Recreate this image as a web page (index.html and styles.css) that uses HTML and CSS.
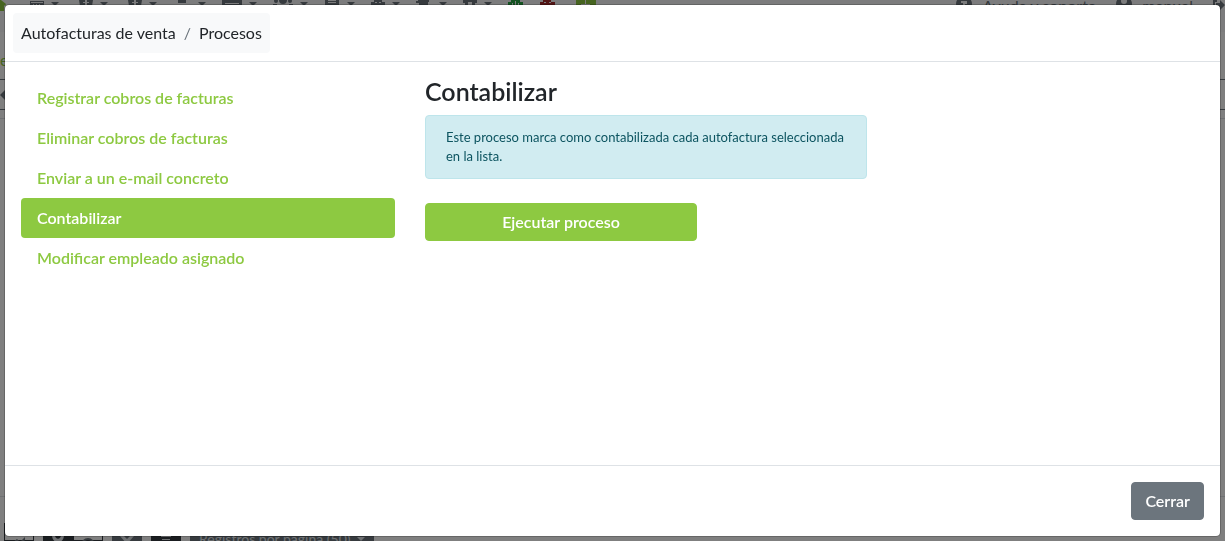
FILE: index.html
```html
<!DOCTYPE html>
<html lang="es">

<head>
  <meta charset="UTF-8">
  <meta name="viewport" content="width=device-width, initial-scale=1.0">

  <title>Autofacturas de venta</title>
  <link rel="stylesheet" href="styles.css">
</head>

<body>
  <!-- List page behind the dialog -->
  <div class="page" aria-hidden="true">
    <header class="toolbar">
      <svg class="home" viewBox="0 0 6 12"><path d="M0 0h1l5 4-1 2-1-1v6H0z"/></svg>
      <div class="menus">
        <span class="menu"><svg class="w18" viewBox="0 0 18 12"><path d="M4 1h14v11H4z"/><path class="cut" d="M5 2h12v1H5zM7 4h1v1H7zM10 4h1v1h-1zM13 4h1v1h-1z"/></svg><i class="caret"></i></span>
        <span class="menu"><svg class="w18" viewBox="0 0 18 12"><path d="M4 0h14l-2 12H6z"/><path class="cut" d="M10 0h2v2h2v1h-2v2h-2V3H8V2h2z"/></svg><i class="caret"></i></span>
        <span class="menu"><svg class="w18" viewBox="0 0 18 12"><path d="M4 0h14l-2 12H6z"/><path class="cut" d="M10 0h2v2h2v1h-2v2h-2V3H8V2h2z"/></svg><i class="caret"></i></span>
        <span class="menu"><svg class="w18" viewBox="0 0 18 12"><path d="M5 0h8v3H5zM0 6h18v6H0z"/></svg><i class="caret"></i></span>
        <span class="menu"><svg class="w20" viewBox="0 0 20 12"><path d="M0 0h20v12H0z"/><path class="cut" d="M3 3h14v1H3z"/></svg><i class="caret"></i></span>
        <span class="menu"><svg class="w20" viewBox="0 0 20 12"><circle cx="3" cy="1" r="2"/><circle cx="10" cy="0" r="4"/><circle cx="17" cy="1" r="2"/><path d="M0 4h4v3H0zM16 4h4v3h-4zM5 6h10v6H5z"/></svg><i class="caret"></i></span>
        <span class="menu"><svg class="w16" viewBox="0 0 16 12"><path d="M1 0h14v12H1z"/><path class="cut" d="M4 0h8v1H4zM4 2h8v1H4z"/></svg><i class="caret"></i></span>
        <span class="menu"><svg class="w14" viewBox="0 0 14 12"><path d="M3 0h8v2h3v10H0V2h3z"/><path class="cut" d="M4 2h2v1H4zM8 2h2v1H8z"/></svg><i class="caret"></i></span>
        <span class="menu"><svg class="w16" viewBox="0 0 16 12"><path d="M2 0h11v2h-1v10H3V3H0V1h2z"/></svg><i class="caret"></i></span>
        <span class="menu"><svg class="w14" viewBox="0 0 14 12"><path d="M0 0h14v3h-2v9H2V3H0z"/><path class="cut" d="M5 2h4v3H5z"/></svg><i class="caret"></i></span>
        <svg class="w16 basket" viewBox="0 0 16 12"><path d="M3 0h9v2h3v3h-1v7H2V5H0V2h3z"/><path class="cut" d="M4 3h1v3H4zM7 1h1v5H7zM10 3h1v3h-1z"/></svg>
        <svg class="w16 robot" viewBox="0 0 16 12"><path d="M3 0h8v2h4v10H0V2h3z"/><path class="cut" d="M4 2h2v1H4zM9 2h2v1H9z"/></svg>
        <svg class="w20 add" viewBox="0 0 20 12"><path d="M0 0h20v12H0z"/><path class="cut" d="M9 0h1v4h4v1h-4v5H9V5H5V4h4z"/></svg>
      </div>
      <div class="session">
        <svg class="w16" viewBox="0 0 16 12"><circle cx="8" cy="4" r="8"/><path class="cut" d="M5 1h6v3H9v2H7V3H5z"/></svg>
        <span class="session-text">Ayuda y soporte</span>
        <svg class="w16" viewBox="0 0 16 12"><circle cx="8" cy="4" r="8"/><circle class="cut" cx="8" cy="1" r="3"/></svg>
        <span class="session-text">manual</span>
        <svg class="w12" viewBox="0 0 12 12"><path d="M0 0h4v2H2v10H0zM3 3h4V0l5 5-5 5V7H3z"/></svg>
      </div>
    </header>
    <div class="title">e</div>
    <div class="filters"><i class="arrow"></i></div>
    <div class="rows"></div>
    <div class="actions">
      <span class="action outline"><svg class="w18" viewBox="0 0 18 12"><path d="M3 6l4-3 3 3 5-5v3l-5 5-3-3-4 3z"/></svg></span>
      <div class="action-group">
        <span class="action dark"><svg class="w18" viewBox="0 0 18 12"><path d="M3 0h3c0 5 6 5 6 0h3c0 4-2 6-4 7v5H7V7C5 6 3 4 3 0z"/></svg></span>
        <span class="action outline"><svg class="w18" viewBox="0 0 18 12"><path d="M2 9a7 7 0 0 1 14 0h-2a5 5 0 0 0-10 0zM8 5h2v4H8z"/></svg></span>
      </div>
      <span class="action"><svg class="w18" viewBox="0 0 18 12"><path d="M2 1h4l3 3 3-3h4l-7 8z"/></svg></span>
      <span class="action dark"><svg class="w18" viewBox="0 0 18 12"><path d="M4 1h10v1H4zM5 4h8v1H5z"/></svg></span>
      <span class="page-size">Registros por página (50) <i class="caret"></i></span>
    </div>
  </div>

  <div class="backdrop">
    <div class="modal" role="dialog" aria-modal="true" aria-label="Procesos">
      <div class="modal-header">
        <ol class="breadcrumb">
          <li>Autofacturas de venta</li>
          <li>Procesos</li>
        </ol>
      </div>

      <div class="modal-body">
        <nav class="processes">
          <a class="process" href="#registrar">Registrar cobros de facturas</a>
          <a class="process" href="#eliminar">Eliminar cobros de facturas</a>
          <a class="process" href="#enviar">Enviar a un e-mail concreto</a>
          <a class="process active" href="#contabilizar">Contabilizar</a>
          <a class="process" href="#modificar">Modificar empleado asignado</a>
        </nav>

        <section class="detail" id="contabilizar">
          <h3>Contabilizar</h3>
          <div class="alert">Este proceso marca como contabilizada cada autofactura seleccionada en la lista.</div>
          <button type="button" class="btn btn-run">Ejecutar proceso</button>
        </section>
      </div>

      <div class="modal-footer">
        <button type="button" class="btn btn-close">Cerrar</button>
      </div>
    </div>
  </div>
</body>
</html>
```

FILE: styles.css
```css
* {
  box-sizing: border-box;
}

body {
  margin: 0;
  height: 100vh;
  overflow: hidden;
  font-family: Lato, "Liberation Sans", sans-serif;
  font-size: 16px;
  line-height: 24px;
  color: #212529;
  background-color: #fff;
}

/* Page behind the dialog */

.page {
  display: flex;
  flex-direction: column;
  height: 100vh;
  overflow: hidden;
}

.page svg {
  flex: none;
  height: 12px;
  fill: #6c757d;
}

.page svg .cut {
  fill: #f8f9fa;
}

.toolbar {
  display: flex;
  flex: none;
  align-items: flex-start;
  height: 32px;
  line-height: 12px;
  color: #6c757d;
  background-color: #f8f9fa;
}

.toolbar .home {
  width: 6px;
  margin-right: 20px;
  fill: #8dc941;
}

.menus,
.menu,
.session {
  display: flex;
}

.menus {
  gap: 16px;
}

.menu {
  gap: 7px;
}

.w12 {
  width: 12px;
}

.w14 {
  width: 14px;
}

.w16 {
  width: 16px;
}

.w18 {
  width: 18px;
}

.w20 {
  width: 20px;
}

.caret {
  width: 0;
  height: 0;
  margin-top: 2px;
  border: 4px solid transparent;
  border-top-color: #6c757d;
  border-bottom: 0;
}

.page .basket {
  fill: #28a745;
}

.page .robot {
  fill: #a52a2a;
}

.page .add {
  margin-left: 4px;
  fill: #8dc941;
}

.session {
  margin-left: auto;
}

.session-text {
  margin: 0 20px 0 10px;
}

.title {
  height: 47px;
  padding-top: 16px;
  color: #8dc941;
}

.filters {
  flex: none;
  height: 31px;
  padding-top: 10px;
  border-top: 1px solid #6c757d;
  border-bottom: 1px solid #6c757d;
}

.arrow {
  display: block;
  width: 5px;
  border: 5px solid transparent;
  border-left: 0;
  border-right-color: #6c757d;
}

.rows {
  flex: 1;
  margin: 8px 0 26px;
  border-top: 1px solid #dee2e6;
  border-bottom: 1px solid #dee2e6;
}

.actions {
  display: flex;
  flex: none;
  height: 18px;
  gap: 9px;
  padding-left: 4px;
}

.action-group {
  display: flex;
}

.action {
  display: flex;
  justify-content: center;
  width: 30px;
  padding-top: 12px;
  background-color: #6c757d;
}

.dark {
  background-color: #343a40;
}

.outline {
  background-color: #fff;
  border: 1px solid #343a40;
}

.page .action svg {
  fill: #dee2e6;
}

.page .outline svg {
  fill: #6c757d;
}

.page-size {
  display: flex;
  gap: 6px;
  padding: 4px 9px 0;
  font-size: 14px;
  color: #dee2e6;
  background-color: #6c757d;
}

.page-size .caret {
  margin-top: 10px;
  border-top-color: #dee2e6;
}

/* Dialog */

.backdrop {
  position: fixed;
  inset: 0;
  display: flex;
  padding: 4px;
  background-color: rgba(0, 0, 0, 0.5);
}

.modal {
  display: flex;
  flex: 1;
  flex-direction: column;
  background-color: #fff;
  background-clip: padding-box;
  border: 1px solid rgba(0, 0, 0, 0.2);
  border-radius: 5px;
}

.modal-header {
  display: flex;
  padding: 8px;
  border-bottom: 1px solid #dee2e6;
}

.breadcrumb {
  display: flex;
  margin: 0;
  padding: 8px;
  list-style: none;
  background-color: #f8f9fa;
  border-radius: 4px;
}

.breadcrumb li + li::before {
  content: "/";
  padding: 0 8px;
  color: #6c757d;
}

.modal-body {
  display: grid;
  flex: 1;
  grid-template-columns: 374px 1fr;
  gap: 30px;
  padding: 16px;
}

.processes {
  display: flex;
  flex-direction: column;
}

.process {
  padding: 8px 16px;
  font-weight: 600;
  color: #8dc941;
  text-decoration: none;
  border-radius: 4px;
}

.process.active {
  color: #fff;
  background-color: #8dc941;
}

.detail h3 {
  margin: 0 0 10px;
  font-size: 25px;
  font-weight: 600;
  line-height: 27px;
}

.alert {
  max-width: 442px;
  margin-bottom: 24px;
  padding: 12px 20px;
  font-size: 13px;
  line-height: 19px;
  color: #0c5460;
  background-color: #d1ecf1;
  border: 1px solid #bee5eb;
  border-radius: 4px;
}

.btn {
  padding: 6px 13px;
  font-family: inherit;
  font-size: 16px;
  font-weight: 600;
  line-height: 24px;
  color: #fff;
  border: 1px solid transparent;
  border-radius: 4px;
  cursor: pointer;
}

.btn-run {
  width: 272px;
  background-color: #8dc941;
  border-color: #8dc941;
}

.btn-close {
  background-color: #6c757d;
  border-color: #6c757d;
}

.modal-footer {
  display: flex;
  justify-content: flex-end;
  padding: 16px;
  border-top: 1px solid #dee2e6;
}
```
